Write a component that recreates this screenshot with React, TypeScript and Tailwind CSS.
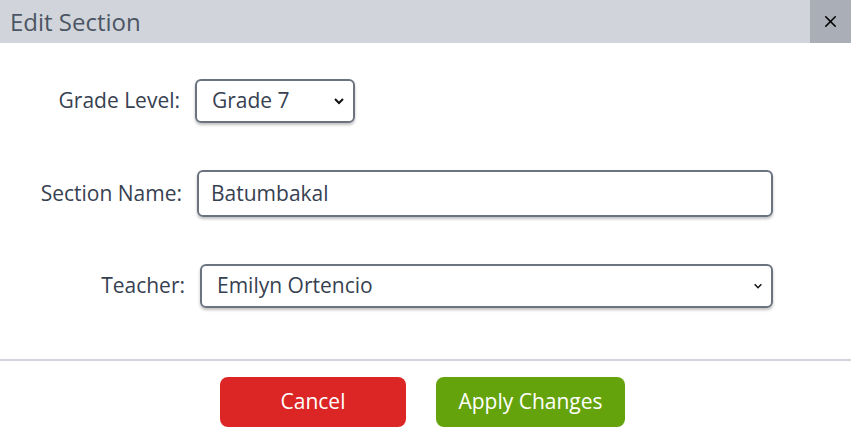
import { FiX } from "react-icons/fi";

const App = () => {
    return (
        <div className="w-[851px] h-[439px] bg-white text-[#374151] overflow-hidden" style={{ fontFamily: '"Open Sans", "Noto Sans", sans-serif' }}>
            <div className="flex h-[43px] bg-[#d1d5db]">
                <div className="flex-1 flex items-center pl-[10px] text-[24px] text-[#4b5563]">Edit Section</div>
                <button className="w-[41px] h-full flex items-center justify-center bg-[#a9aeb7] text-black">
                    <FiX size={19} strokeWidth={2} />
                </button>
            </div>

            <div className="pt-[36px] h-[316px]">
                <div className="flex items-center h-[44px]">
                    <label className="w-[181px] text-right text-[21px] pr-[1px]">Grade Level:</label>
                    <div className="ml-[14px] w-[160px] h-[44px] border-2 border-[#6b7280] rounded-md shadow-[0_2px_3px_rgba(0,0,0,0.25)] flex items-center justify-between pl-[15px] pr-[8px] text-[21px]">
                        <span>Grade 7</span>
                        <svg width="12" height="12" viewBox="0 0 12 12"><path d="M2 4l4 4 4-4" fill="none" stroke="#111" strokeWidth="2" /></svg>
                    </div>
                </div>

                <div className="flex items-center h-[47px] mt-[47px]">
                    <label className="w-[182px] text-right text-[21px]">Section Name:</label>
                    <div className="ml-[15px] w-[576px] h-[47px] border-2 border-[#6b7280] rounded-md shadow-[0_2px_3px_rgba(0,0,0,0.25)] flex items-center pl-[12px] text-[21px]">
                        Batumbakal
                    </div>
                </div>

                <div className="flex items-center h-[44px] mt-[47px]">
                    <label className="w-[185px] text-right text-[21px]">Teacher:</label>
                    <div className="ml-[15px] w-[573px] h-[44px] border-2 border-[#6b7280] rounded-md shadow-[0_2px_3px_rgba(0,0,0,0.25)] flex items-center justify-between pl-[15px] pr-[8px] text-[21px]">
                        <span>Emilyn Ortencio</span>
                        <svg width="10" height="10" viewBox="0 0 12 12"><path d="M2 4l4 4 4-4" fill="none" stroke="#111" strokeWidth="1.8" /></svg>
                    </div>
                </div>
            </div>

            <div className="border-t-2 border-[#d1d5db]" />

            <div className="flex justify-center gap-[30px] pt-[16px] pr-[6px]">
                <button className="w-[186px] h-[50px] rounded-lg bg-[#dc2626] text-white text-[21px]">Cancel</button>
                <button className="w-[189px] h-[50px] rounded-lg bg-[#65a30d] text-white text-[21px]">Apply Changes</button>
            </div>
        </div>
    );
};

export default App;
